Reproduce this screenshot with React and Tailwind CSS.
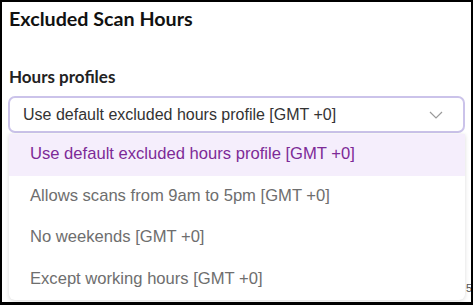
import React from "react";

const options = [
  "Use default excluded hours profile [GMT +0]",
  "Allows scans from 9am to 5pm [GMT +0]",
  "No weekends [GMT +0]",
  "Except working hours [GMT +0]",
];

const App = () => {
  return (
    <div className="w-[473px] h-[305px] bg-white border-2 border-b-[3px] border-black overflow-hidden relative">
      {/* title */}
      <div className="px-[7px] pt-[4px]">
        <h2 className="h-[26px] text-[19.7px] leading-[26px] font-bold text-[#111] font-['Lato','Noto_Sans',sans-serif]">
          Excluded Scan Hours
        </h2>
        <div className="mt-[34px] h-[22px] text-[17px] leading-[22px] font-bold text-[#222] font-['Lato','Noto_Sans',sans-serif]">
          Hours profiles
        </div>
      </div>

      {/* select */}
      <div className="mx-[6px] mt-[8px] h-[37px] border-2 border-[#cbc3ea] rounded-[7px] flex items-center justify-between pl-[13px] pr-[20px] font-['Liberation_Sans','Arial',sans-serif]">
        <span className="text-[16px] text-[#333]">
          Use default excluded hours profile [GMT +0]
        </span>
        <svg width="14" height="8" viewBox="0 0 14 8" fill="none">
          <path d="M1 1l6 6 6-6" stroke="#9a9a9a" strokeWidth="1.2" />
        </svg>
      </div>

      {/* hidden text behind list */}
      <div className="absolute right-[-1px] top-[278px] text-[11px] text-[#555] font-['Liberation_Sans',sans-serif]">
        5
      </div>

      {/* dropdown list */}
      <div className="absolute left-[7px] right-[6px] top-[132px] h-[166px] bg-white rounded-b-[6px] shadow-[0_1px_4px_rgba(0,0,0,0.15)] flex flex-col font-['Liberation_Sans','Arial',sans-serif]">
        {options.map((opt, i) => (
          <div
            key={opt}
            className={`h-[41.5px] flex items-center pl-[21px] text-[16.6px] ${
              i === 0 ? "bg-[#f5eefc] text-[#7d2a97]" : "text-[#6e6e6e]"
            }`}
          >
            {opt}
          </div>
        ))}
      </div>
    </div>
  );
};

export default App;
